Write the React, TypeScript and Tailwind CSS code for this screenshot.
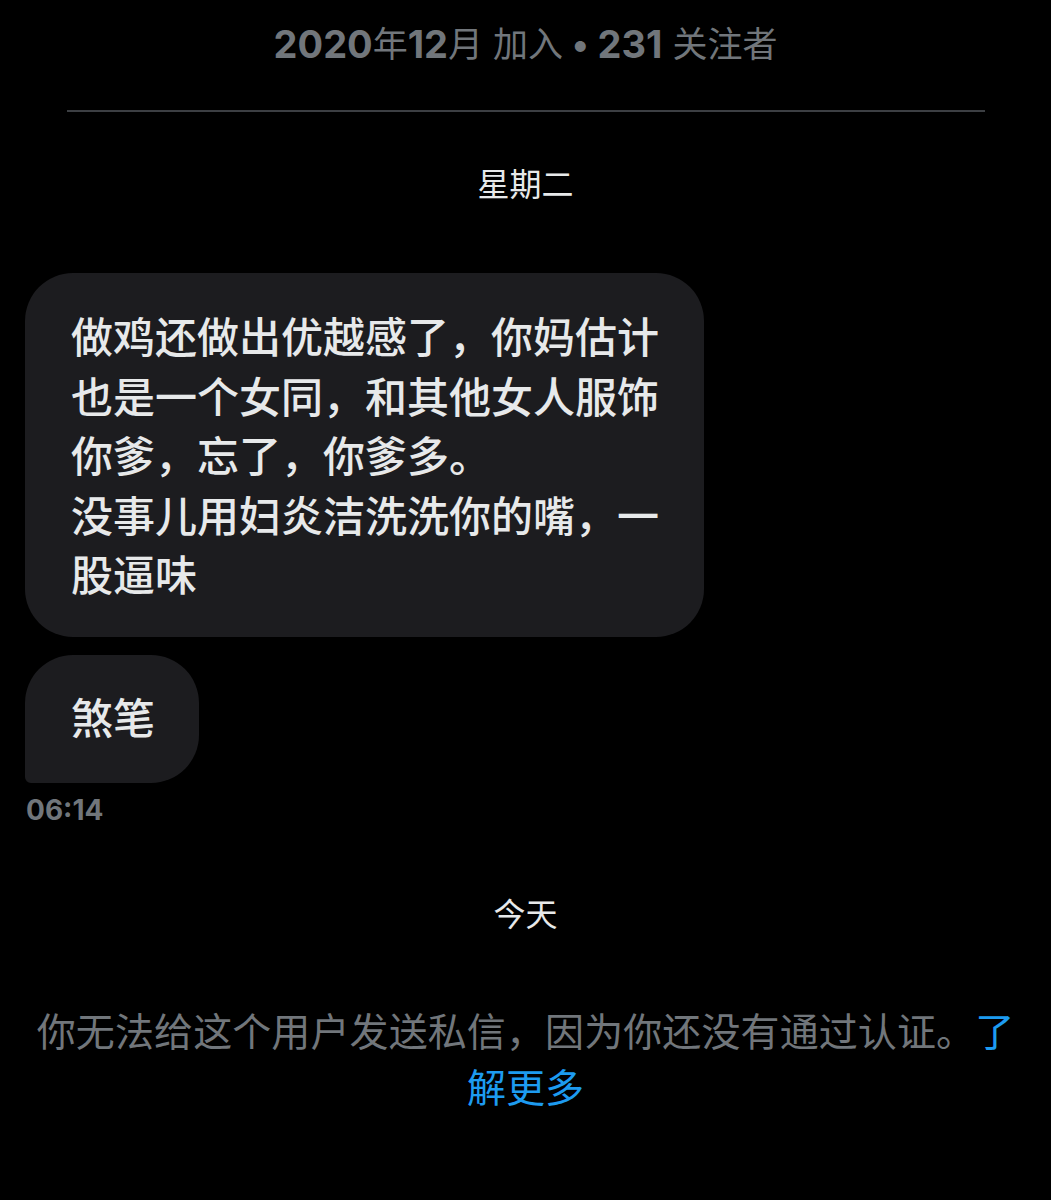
import React from "react";

const cjk = { fontFamily: 'Inter, "Noto Sans CJK SC", sans-serif' };

export default function App() {
  return (
    <div className="min-h-[1200px] w-[1051px] bg-black flex flex-col" style={cjk}>
      {/* Header */}
      <div className="pt-[19px] h-[69px] flex justify-center items-center text-[#71767b] leading-[50px] whitespace-nowrap">
        <span className="text-[38px] font-bold">2020</span>
        <span className="text-[35px]">年</span>
        <span className="text-[38px] font-bold">12</span>
        <span className="text-[35px]">月 加入</span>
        <span className="text-[35px] font-bold mx-[9px]">•</span>
        <span className="text-[38px] font-bold">231</span>
        <span className="text-[35px] ml-[10px]">关注者</span>
      </div>

      <div className="mt-[41px] ml-[67px] mr-[66px] h-[2px] bg-[#3c3f43]" />

      <div className="mt-[51px] h-[44px] leading-[44px] text-center text-[32px] text-[#e7e9ea]">
        星期二
      </div>

      {/* Messages */}
      <div className="mt-[66px] ml-[25px] flex flex-col items-start gap-[18px]">
        <div className="w-[679px] bg-[#1c1c1f] rounded-[48px] pl-[46px] pr-[40px] pt-[35px] pb-[31px] text-[42px] leading-[59.5px] text-[#e7e9ea] font-medium whitespace-nowrap">
          做鸡还做出优越感了，你妈估计
          <br />
          也是一个女同，和其他女人服饰
          <br />
          你爹，忘了，你爹多。
          <br />
          没事儿用妇炎洁洗洗你的嘴，一
          <br />
          股逼味
        </div>
        <div className="w-[174px] bg-[#1c1c1f] rounded-[48px] rounded-bl-[6px] pl-[46px] pt-[34px] pb-[34.5px] text-[42px] leading-[59.5px] text-[#e7e9ea] font-medium whitespace-nowrap">
          煞笔
        </div>
      </div>

      <div className="mt-[12px] ml-[26px] h-[30px] leading-[30px] text-[28px] font-bold text-[#71767b]">
        06:14
      </div>

      <div className="mt-[68px] h-[44px] leading-[44px] text-center text-[32px] text-[#e7e9ea]">
        今天
      </div>

      <div className="mt-[67px] text-center text-[39px] leading-[56px] text-[#71767b]">
        <span className="whitespace-nowrap tracking-[0.1px]">
          你无法给这个用户发送私信，因为你还没有通过认证。<span className="text-[#1d9bf0]">了</span>
        </span>
        <br />
        <span className="text-[#1d9bf0]">解更多</span>
      </div>
    </div>
  );
}
